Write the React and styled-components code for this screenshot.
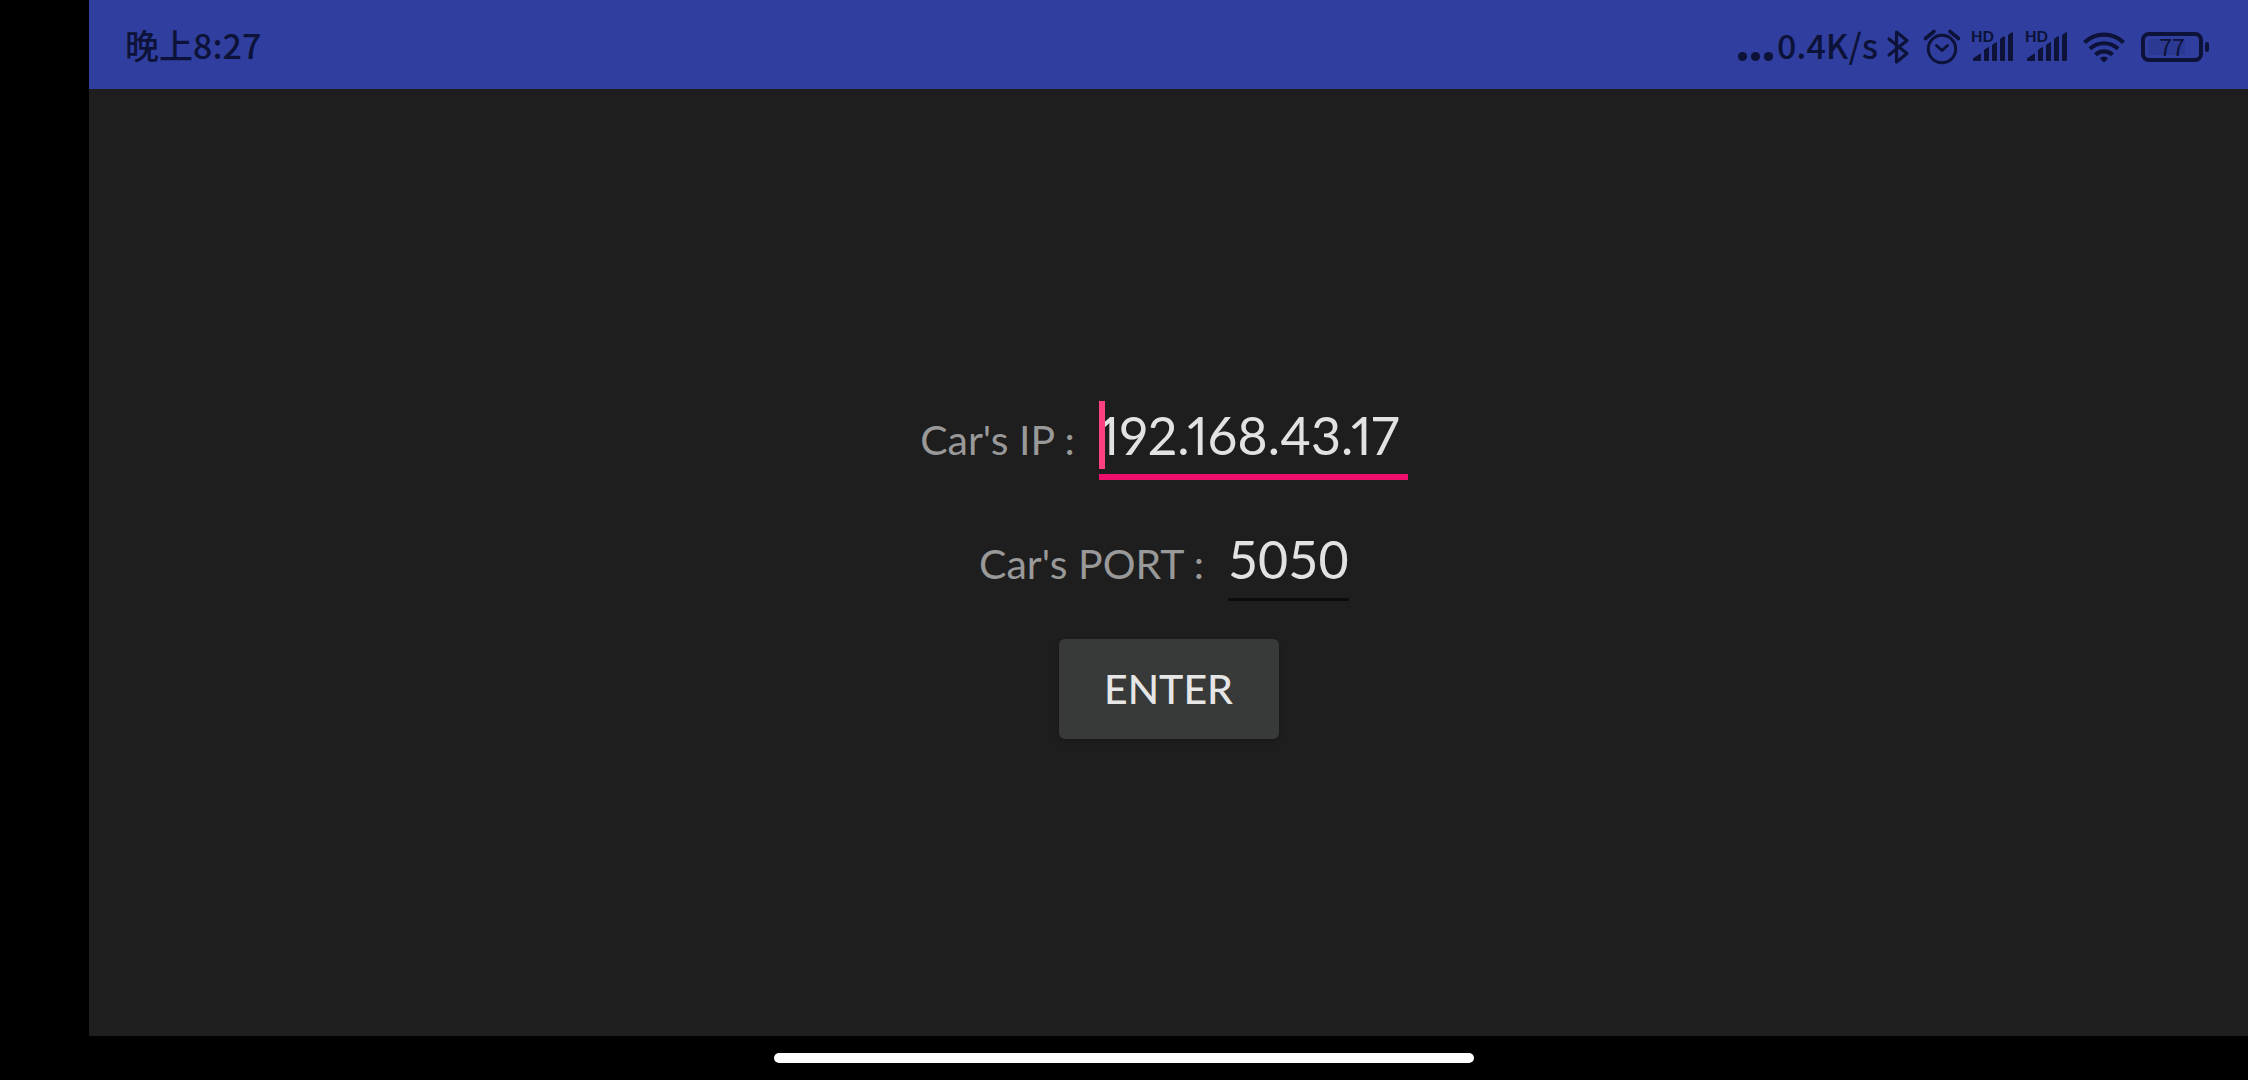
import React, { useState } from "react";
import styled, { createGlobalStyle } from "styled-components";

const INK = "#0d1238";
const UI_FONT = '"Lato", "Noto Sans CJK SC", sans-serif';
const STATUS_FONT = '"Noto Sans CJK SC", sans-serif';

const GlobalStyle = createGlobalStyle`
  * { box-sizing: border-box; }
  body { margin: 0; background: #000; font-family: ${UI_FONT}; }
`;

const Screen = styled.div`
  min-height: 100vh;
  padding-left: 89px;
  display: flex;
  flex-direction: column;
  background: #000;
`;

const StatusBar = styled.header`
  height: 89px;
  flex: none;
  padding: 0 38px 0 36px;
  display: flex;
  align-items: center;
  justify-content: space-between;
  background: #303f9f;
  color: ${INK};
  font: 500 34px/40px ${STATUS_FONT};
`;

const StatusGroup = styled.div`
  display: flex;
  align-items: center;
  gap: 10px;
`;

const Speed = styled.span`
  display: flex;
  align-items: center;
  gap: 2px;
`;

const Icon = styled.svg`
  display: block;
  flex: none;
  height: 40px;
  overflow: visible;
`;

const HdText = styled.text`
  font: 900 15px ${UI_FONT};
  fill: ${INK};
`;

const LevelText = styled.text`
  font: 400 23px ${STATUS_FONT};
  fill: ${INK};
`;

const Main = styled.main`
  flex: 1;
  padding-top: 14px;
  display: flex;
  align-items: center;
  justify-content: center;
  background: #1e1e1e;
`;

const Form = styled.form`
  display: flex;
  flex-direction: column;
  align-items: center;
`;

const Row = styled.div`
  display: flex;
  align-items: baseline;
  gap: 24px;
  padding-right: 9px;
  margin-bottom: ${(p) => p.$gap}px;
`;

const Label = styled.label`
  color: #999;
  font-size: 41px;
  line-height: 48px;
  white-space: pre;
`;

const Field = styled.div`
  position: relative;
`;

const Input = styled.input`
  display: block;
  width: ${(p) => p.$width}px;
  height: ${(p) => (p.$active ? 79 : 76)}px;
  padding: 0 0 5px;
  border: 0;
  border-bottom: ${(p) => (p.$active ? "6px solid #ee0e6c" : "3px solid #0c0c0c")};
  border-radius: 0;
  outline: 0;
  background: transparent;
  color: #e2e2e2;
  caret-color: transparent;
  font-family: ${UI_FONT};
  font-size: 52px;
  font-variant-numeric: ${(p) => (p.$active ? "proportional-nums" : "tabular-nums")};
  line-height: 68px;
`;

const Caret = styled.span`
  position: absolute;
  top: 0;
  left: 0;
  width: 6px;
  height: 68px;
  background: #ff4081;
`;

const EnterButton = styled.button`
  width: 220px;
  height: 100px;
  padding: 0;
  border: 0;
  border-radius: 6px;
  background: #383a39;
  box-shadow: 0 2px 4px rgba(0, 0, 0, 0.2);
  color: #e6e6e6;
  font-family: ${UI_FONT};
  font-size: 41px;
  font-weight: 500;
`;

const NavBar = styled.footer`
  height: 44px;
  flex: none;
  margin-left: -89px;
  display: flex;
  align-items: center;
  justify-content: center;
`;

const HomePill = styled.div`
  width: 31.1%;
  height: 10px;
  border-radius: 5px;
  background: #fff;
`;

function Dots() {
  return (
    <Icon width="38" viewBox="0 0 38 40" fill={INK} aria-hidden="true">
      <circle cx="5.5" cy="31.5" r="4.6" />
      <circle cx="18.5" cy="31.5" r="4.6" />
      <circle cx="31.5" cy="31.5" r="4.6" />
    </Icon>
  );
}

function Bluetooth() {
  return (
    <Icon width="24" viewBox="2 0 24 40" fill="none" stroke={INK} strokeWidth="3.2" strokeLinecap="round" strokeLinejoin="round" aria-hidden="true">
      <path d="M3 14 21 28.5 10.5 37V7L21 15.5 3 30" />
    </Icon>
  );
}

function Alarm() {
  return (
    <Icon width="40" viewBox="0 0 40 40" fill="none" stroke={INK} strokeWidth="3" aria-hidden="true">
      <circle cx="20" cy="24" r="13.7" />
      <path d="M3.5 13.5 12 6.5M28 6.5l8.5 7" strokeWidth="3.6" strokeLinecap="round" />
      <path d="M14.5 20.5 20 25.5l5.5-5" strokeLinecap="round" strokeLinejoin="round" />
    </Icon>
  );
}

function Signal() {
  return (
    <Icon width="44" viewBox="0 0 44 40" fill={INK} aria-hidden="true">
      <HdText x="-1" y="17">HD</HdText>
      <path stroke={INK} strokeWidth="1" strokeLinejoin="round" d="M1.5 33.5 8.500 29v6.500H1.500zM12.500 25l4-2.500v13h-4zM20.500 20l4-2.500v18h-4zM28.500 14l4-2.500v24h-4zM36.500 10l4-2.500v28h-4z" />
    </Icon>
  );
}

function Wifi() {
  return (
    <Icon width="48" viewBox="0 0 48 40" fill="none" stroke={INK} strokeWidth="4.2" aria-hidden="true">
      <path d="M4.500 17.500a28 28 0 0 1 39 0M10 23.800a20.500 20.500 0 0 1 28 0M15.500 29.800a12.500 12.500 0 0 1 17 0" />
      <path d="M20 33Q24 30 28 33 27 35.500 24 37.500 21 35.500 20 33z" fill={INK} stroke="none" />
    </Icon>
  );
}

function Battery() {
  return (
    <Icon width="72" viewBox="0 0 72 40" role="img" aria-label="Battery">
      <rect x="10" y="14" width="37" height="16" rx="2" fill="#2c3993" />
      <rect x="5" y="9" width="58" height="26" rx="6" fill="none" stroke={INK} strokeWidth="4" />
      <rect x="67" y="17" width="4" height="10" rx="2" fill={INK} />
      <LevelText x="34" y="31" textAnchor="middle">77</LevelText>
    </Icon>
  );
}

export default function App() {
  const [ip, setIp] = useState("192.168.43.17");
  const [port, setPort] = useState("5050");

  return (
    <Screen>
      <GlobalStyle />
      <StatusBar>
        <time>晚上8:27</time>
        <StatusGroup>
          <Speed>
            <Dots />
            0.4K/s
          </Speed>
          <Bluetooth />
          <Alarm />
          <Signal />
          <Signal />
          <Wifi />
          <Battery />
        </StatusGroup>
      </StatusBar>
      <Main>
        <Form onSubmit={(e) => e.preventDefault()}>
          <Row $gap={45}>
            <Label htmlFor="ip">Car's IP :</Label>
            <Field>
              <Caret />
              <Input id="ip" $active $width={309} value={ip} onChange={(e) => setIp(e.target.value)} />
            </Field>
          </Row>
          <Row $gap={38}>
            <Label htmlFor="port">Car's PORT :</Label>
            <Field>
              <Input id="port" $width={121} value={port} onChange={(e) => setPort(e.target.value)} />
            </Field>
          </Row>
          <EnterButton type="submit">ENTER</EnterButton>
        </Form>
      </Main>
      <NavBar>
        <HomePill />
      </NavBar>
    </Screen>
  );
}
